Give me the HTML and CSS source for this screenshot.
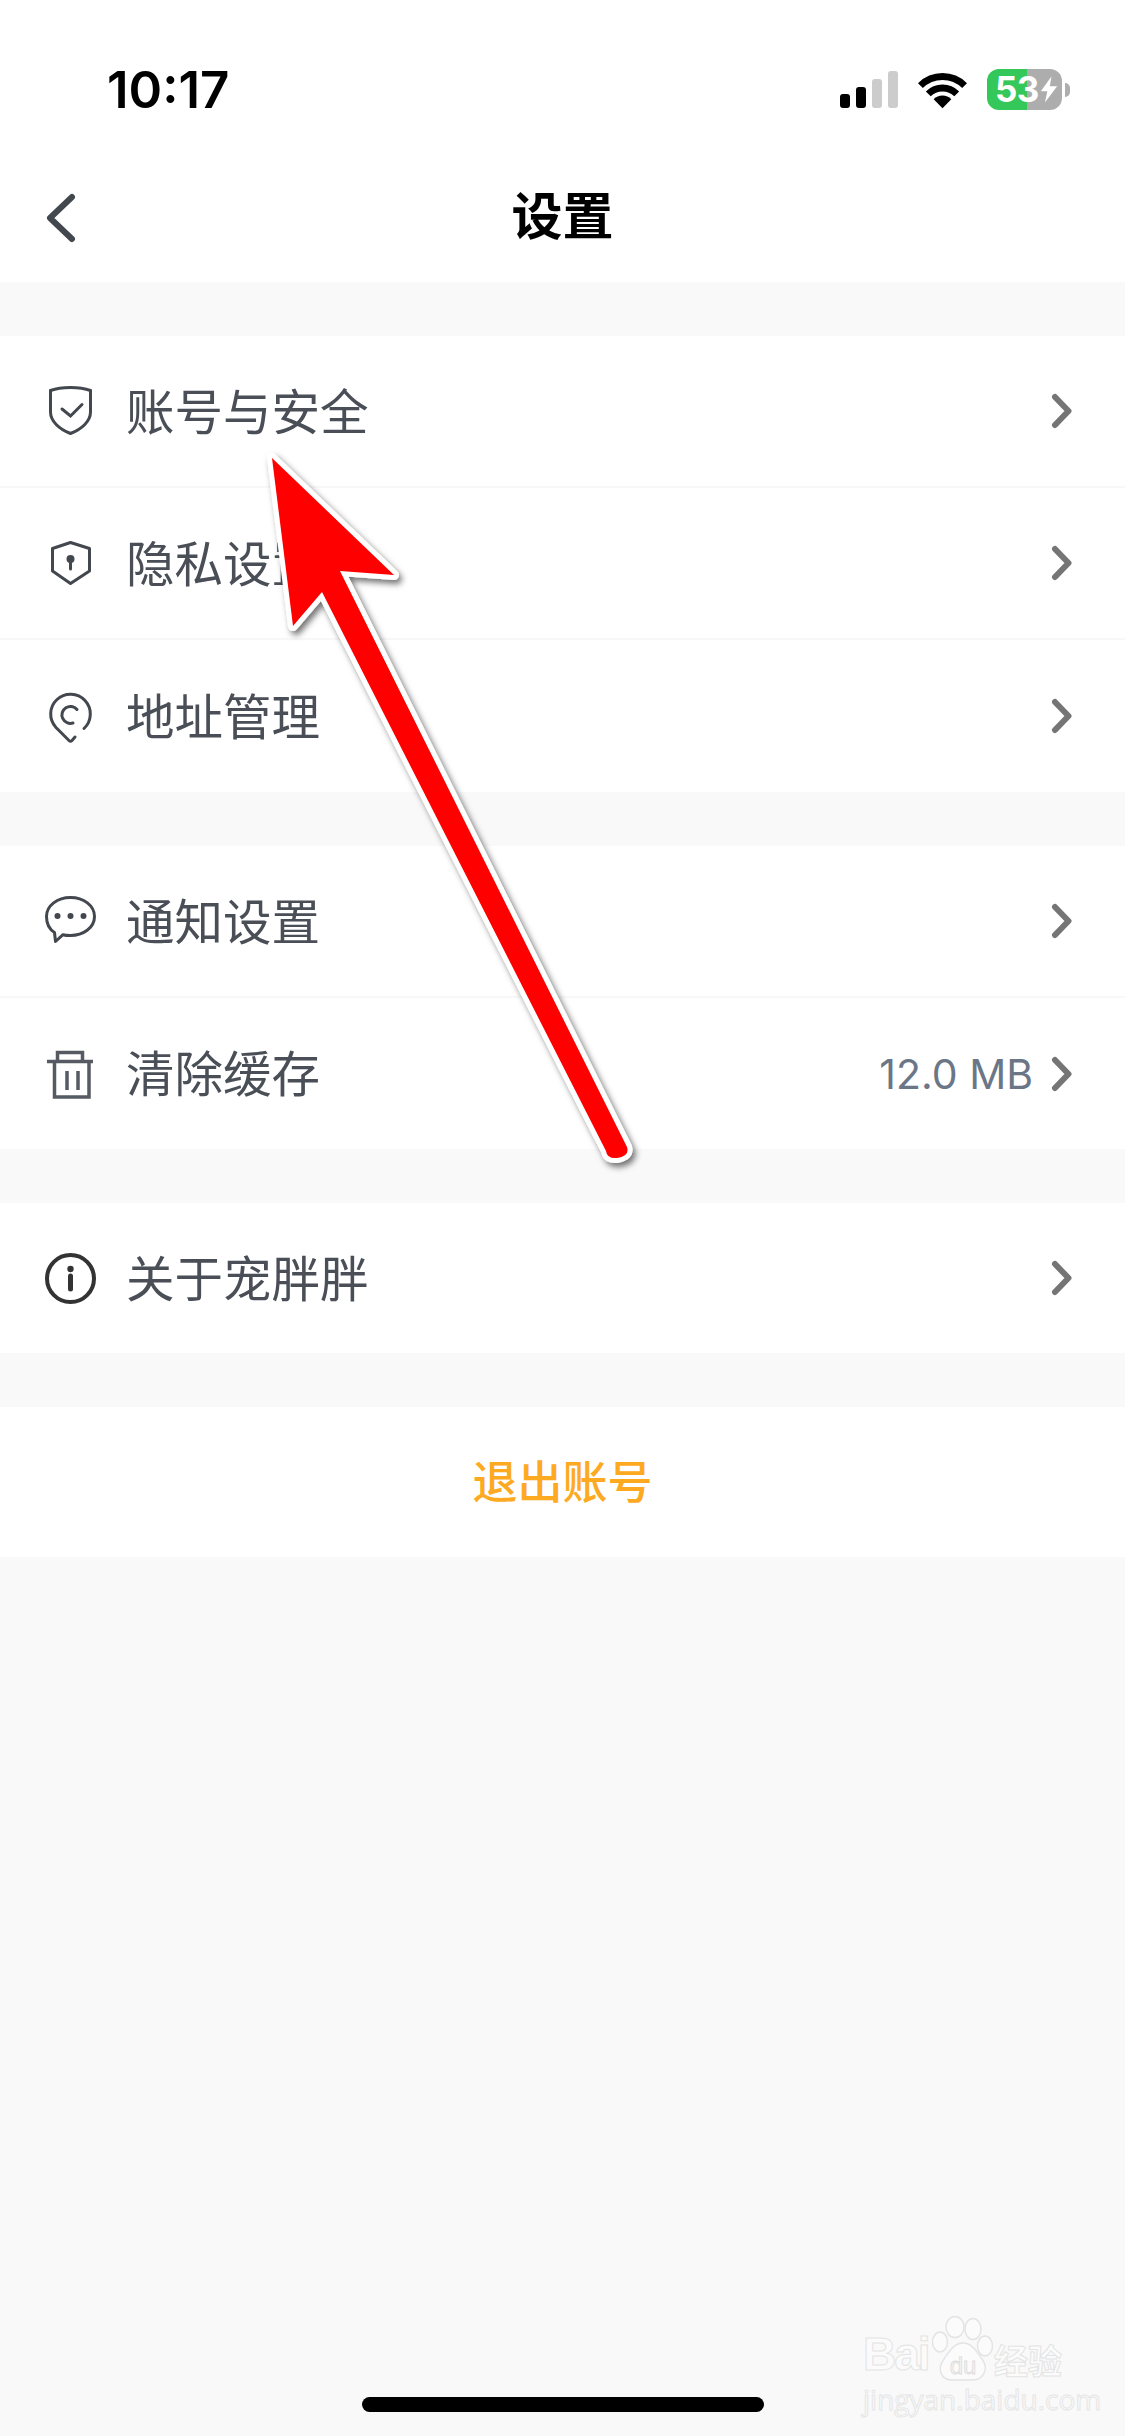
FILE: index.html
```html
<!DOCTYPE html>
<html lang="zh-CN">
<head>
    <meta charset="UTF-8">
    <title>设置</title>
    <link rel="stylesheet" href="styles.css">
</head>
<body>

<div class="page">
    <header class="header">
        <div class="status-bar">
            <span class="time">10:17</span>
            <div class="status-icons">
                <div class="signal">
                    <span class="bar bar-1"></span>
                    <span class="bar bar-2"></span>
                    <span class="bar bar-3"></span>
                    <span class="bar bar-4"></span>
                </div>
                <svg class="wifi" width="51" height="38" viewBox="0 0 52 38">
                    <path d="M3.5 14.5A32 32 0 0 1 48.5 14.5" fill="none" stroke="#000" stroke-width="7"/>
                    <path d="M11.5 23A20.5 20.5 0 0 1 40.5 23" fill="none" stroke="#000" stroke-width="7"/>
                    <path d="M26 37.5L17 28.5A12.5 12.5 0 0 1 35 28.5Z" fill="#000"/>
                </svg>
                <div class="battery">
                    <div class="battery-body">
                        <span class="battery-num">53</span>
                        <svg class="bolt" width="18" height="27" viewBox="0 0 22 32">
                            <path d="M14 0L1 18H9L6 32L21 12H12Z" fill="#fff"/>
                        </svg>
                    </div>
                    <span class="battery-nub"></span>
                </div>
            </div>
        </div>
        <nav class="nav">
            <svg class="back" width="32" height="50" viewBox="0 0 32 50">
                <path d="M27 4L5 25L27 46" fill="none" stroke="#43474e" stroke-width="6" stroke-linecap="round" stroke-linejoin="round"/>
            </svg>
            <h1 class="title">设置</h1>
        </nav>
    </header>

    <main class="content">
        <section class="group">
            <div class="row">
                <svg class="icon" width="56" height="56" viewBox="0 0 56 56">
                    <path d="M28.5 4.500C21 4.500 14 5.500 8.500 7.500V29C8.500 38 17 46 28.500 50.500C40 46 48.500 38 48.500 29V7.500C43 5.500 36 4.500 28.500 4.500Z" class="line"/>
                    <path d="M20 26L28.500 33L40 21.500" class="line"/>
                </svg>
                <span class="label">账号与安全</span>
                <svg class="chevron" width="24" height="36" viewBox="0 0 24 36"><path d="M4 4L17.500 18L4 32" /></svg>
            </div>
            <div class="row">
                <svg class="icon" width="56" height="56" viewBox="0 0 56 56">
                    <path d="M28.500 7.500L47.500 13.500V36L28.500 48.500L10.500 36V13.500Z" class="line round"/>
                    <circle cx="28.500" cy="24" r="4" fill="#43474e"/>
                    <path d="M28.500 25V34" class="line"/>
                </svg>
                <span class="label">隐私设置</span>
                <svg class="chevron" width="24" height="36" viewBox="0 0 24 36"><path d="M4 4L17.500 18L4 32" /></svg>
            </div>
            <div class="row">
                <svg class="icon" width="56" height="56" viewBox="0 0 56 56">
                    <path d="M33 49L30 52.500Q28.500 54 27 52.500L14 39.500A19.800 19.800 0 1 1 42 40.500" class="line"/>
                    <path d="M35 21.500A8.500 8.500 0 1 0 31 35" class="line"/>
                </svg>
                <span class="label">地址管理</span>
                <svg class="chevron" width="24" height="36" viewBox="0 0 24 36"><path d="M4 4L17.500 18L4 32" /></svg>
            </div>
        </section>

        <section class="group">
            <div class="row">
                <svg class="icon" width="56" height="56" viewBox="0 0 56 56">
                    <path d="M28.500 4.500C41.500 4.500 52.500 12.500 52.500 23.500C52.500 35 41 42.500 28.500 42.500C25.500 42.500 23 42.300 21 41.700L13.500 48.500L12.500 39.500C7 36 4.500 30 4.500 23.500C4.500 12.500 15.500 4.500 28.500 4.500Z" class="line round"/>
                    <circle cx="15.500" cy="23" r="3" fill="#43474e"/>
                    <circle cx="28.500" cy="23" r="3" fill="#43474e"/>
                    <circle cx="41.500" cy="23" r="3" fill="#43474e"/>
                </svg>
                <span class="label">通知设置</span>
                <svg class="chevron" width="24" height="36" viewBox="0 0 24 36"><path d="M4 4L17.500 18L4 32" /></svg>
            </div>
            <div class="row row-mid">
                <svg class="icon" width="56" height="56" viewBox="0 0 56 56">
                    <path d="M5 15.500H51M15.500 15V6.500H40.500V15M12.500 15.500V51H47V15.500M25 25V44M36 25V44" class="line soft"/>
                </svg>
                <span class="label">清除缓存</span>
                <span class="value">12.0 MB</span>
                <svg class="chevron" width="24" height="36" viewBox="0 0 24 36"><path d="M4 4L17.500 18L4 32" /></svg>
            </div>
        </section>

        <section class="group">
            <div class="row row-short">
                <svg class="icon" width="56" height="56" viewBox="0 0 56 56">
                    <circle cx="28.500" cy="28.500" r="23.500" class="line dark"/>
                    <circle cx="28.500" cy="19" r="3.200" fill="#333"/>
                    <path d="M28.500 26V39" class="line dark wide"/>
                </svg>
                <span class="label">关于宠胖胖</span>
                <svg class="chevron" width="24" height="36" viewBox="0 0 24 36"><path d="M4 4L17.500 18L4 32" /></svg>
            </div>
        </section>

        <section class="group">
            <div class="logout">退出账号</div>
        </section>

        <div class="home-area">
            <span class="home-bar"></span>
        </div>
    </main>
</div>

<!-- annotation drawn on top of the screenshot -->
<svg class="arrow" width="1125" height="2436" viewBox="0 0 1125 2436">
    <defs>
        <filter id="arrowShadow" x="-20%" y="-20%" width="140%" height="140%">
            <feDropShadow dx="3" dy="4" stdDeviation="3" flood-color="#000" flood-opacity="0.55"/>
        </filter>
    </defs>
    <path d="M272 458L394 575L340 571L627 1147Q630 1156 617 1158Q607 1159 606 1151L322 592L293 626Z" fill="#f00" stroke="#fff" stroke-width="10" stroke-linejoin="round" paint-order="stroke" filter="url(#arrowShadow)"/>
</svg>

<div class="watermark">
    <div class="wm-top">
        <span class="wm-bai">Bai</span>
        <svg class="wm-paw" width="62" height="66" viewBox="0 0 62 66">
            <g fill="#fbfbfb" stroke="#e4e4e4" stroke-width="1.500">
                <ellipse cx="23" cy="11" rx="9" ry="10.500"/>
                <ellipse cx="41" cy="13" rx="8" ry="10.500"/>
                <ellipse cx="8" cy="26" rx="7.500" ry="10" />
                <ellipse cx="53" cy="30" rx="7.500" ry="10"/>
                <path d="M31 27C40 27 45 36 50 43C58 54 50 64 41 64H20C10 64 4 54 12 43C17 36 22 27 31 27Z"/>
            </g>
            <text x="31" y="58" text-anchor="middle" class="wm-du">du</text>
        </svg>
        <span class="wm-jy">经验</span>
    </div>
    <div class="wm-url">jingyan.baidu.com</div>
</div>

</body>
</html>
```

FILE: styles.css
```css
* {
    box-sizing: border-box;
}
html, body {
    margin: 0;
    padding: 0;
}
body {
    width: 1125px;
    height: 2436px;
    overflow: hidden;
    position: relative;
    font-family: "Noto Sans CJK SC", "Noto Sans", sans-serif;
    background-color: #f9f9f9;
}
.page {
    height: 100%;
    display: flex;
    flex-direction: column;
}

/* status bar + nav */
.header {
    height: 282px;
    background-color: #fff;
}
.status-bar {
    height: 154px;
    padding: 65px 55px 0 107px;
    display: flex;
    justify-content: space-between;
    align-items: flex-start;
}
.time {
    font-family: Inter, sans-serif;
    font-weight: 600;
    font-size: 51px;
    line-height: 50px;
    color: #000;
}
.status-icons {
    display: flex;
    align-items: center;
    gap: 19px;
    margin-top: 4px;
}
.signal {
    display: flex;
    align-items: flex-end;
    gap: 6px;
    height: 37px;
}
.bar {
    width: 10px;
    border-radius: 3px;
    background-color: #000;
}
.bar-1 { height: 14px; }
.bar-2 { height: 21px; }
.bar-3 { height: 29px; background-color: #ccc; }
.bar-4 { height: 37px; background-color: #ccc; }
.battery {
    display: flex;
    align-items: center;
    gap: 3px;
}
.battery-body {
    width: 75px;
    height: 41px;
    border-radius: 12px;
    background: linear-gradient(to right, #34c759 53%, #adadad 53%);
    display: flex;
    align-items: center;
    padding-left: 8px;
}
.battery-num {
    font-family: Inter, sans-serif;
    font-weight: 700;
    font-size: 35px;
    line-height: 41px;
    letter-spacing: -0.5px;
    color: #fff;
}
.bolt {
    margin-left: 1px;
}
.battery-nub {
    width: 5px;
    height: 14px;
    border-radius: 0 5px 5px 0;
    background-color: #adadad;
}
.nav {
    height: 128px;
    position: relative;
    display: flex;
    align-items: center;
    justify-content: center;
}
.back {
    position: absolute;
    left: 45px;
    top: 39px;
}
.title {
    margin: 0;
    padding-bottom: 10px;
    font-size: 51px;
    font-weight: 700;
    color: #000;
}

/* settings list */
.content {
    flex: 1;
    display: flex;
    flex-direction: column;
    padding-top: 54px;
}
.group {
    background-color: #fff;
    margin-bottom: 54px;
}
.row {
    height: 152px;
    padding: 0 50px 0 42px;
    display: flex;
    align-items: center;
    border-bottom: 2px solid #f8f8f8;
}
.row:last-child {
    border-bottom: none;
}
.row-mid {
    height: 151px;
}
.row-short {
    height: 150px;
}
.icon {
    flex-shrink: 0;
}
.label {
    flex: 1;
    margin-left: 28px;
    padding-bottom: 5px;
    font-size: 48.500px;
    color: #4a4f57;
}
.value {
    margin-right: 18px;
    font-family: Inter, sans-serif;
    font-size: 41px;
    color: #6b7686;
}
.chevron path {
    fill: none;
    stroke: #757575;
    stroke-width: 6;
    stroke-linecap: round;
    stroke-linejoin: round;
}
.line {
    fill: none;
    stroke: #43474e;
    stroke-width: 3;
    stroke-linecap: round;
}
.line.round {
    stroke-linejoin: round;
}
.line.soft {
    stroke: #565b63;
    stroke-width: 3.500;
    stroke-linecap: butt;
}
.line.dark {
    stroke: #333;
    stroke-width: 4;
}
.line.wide {
    stroke-width: 5;
}
.logout {
    height: 150px;
    padding-bottom: 5px;
    display: flex;
    align-items: center;
    justify-content: center;
    font-size: 45px;
    font-weight: 500;
    color: #fdaa22;
}
.home-area {
    margin-top: auto;
    height: 39px;
    display: flex;
    justify-content: center;
}
.home-bar {
    width: 402px;
    height: 15px;
    border-radius: 8px;
    background-color: #000;
}

/* overlays */
.arrow {
    position: absolute;
    left: 0;
    top: 0;
    pointer-events: none;
}
.watermark {
    position: absolute;
    left: 863px;
    top: 2316px;
    width: 204px;
}
.wm-top {
    display: flex;
    align-items: flex-end;
    height: 66px;
}
.wm-bai, .wm-jy {
    color: #fbfbfb;
    font-weight: 700;
    -webkit-text-stroke: 1px #e4e4e4;
}
.wm-bai {
    width: 69px;
    font-family: "Liberation Sans", sans-serif;
    font-size: 46px;
    line-height: 56px;
    letter-spacing: -2px;
}
.wm-jy {
    margin-left: 0;
    font-size: 34px;
    line-height: 44px;
}
.wm-du {
    font-family: "Liberation Sans", sans-serif;
    font-size: 24px;
    fill: #f4f4f4;
    stroke: #dcdcdc;
    stroke-width: 0.800;
}
.wm-url {
    font-family: "Open Sans", sans-serif;
    font-size: 28px;
    line-height: 34px;
    color: #fbfbfb;
    -webkit-text-stroke: 1px #e6e6e6;
    white-space: nowrap;
}
```
